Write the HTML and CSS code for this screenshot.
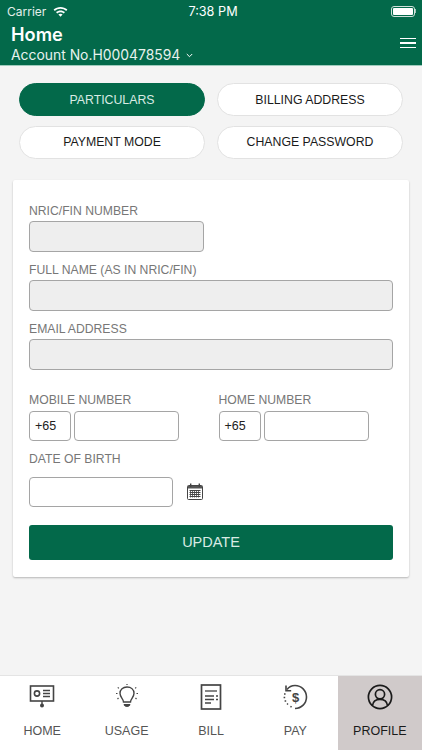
FILE: index.html
```html
<!DOCTYPE html>
<html lang="en">
  <head>
    <meta charset="UTF-8" />
    <meta name="viewport" content="width=device-width, initial-scale=1.0" />
    <title>Profile</title>
    <link rel="stylesheet" href="styles.css">
  </head>
  <body>
    <div class="app">
      <header class="header">
        <div class="status">
          <div class="status-left">
            <span>Carrier</span>
            <svg class="wifi" width="15" height="11" viewBox="0 0 15 11">
              <path d="M0.6 3.6C4.4 0.1 10.6 0.1 14.4 3.6L13.2 4.9C10 2 5 2 1.8 4.9Z" fill="#fff" />
              <path d="M3 6.1C5.5 3.8 9.5 3.8 12 6.1L10.8 7.4C8.9 5.7 6.1 5.7 4.2 7.4Z" fill="#fff" />
              <path d="M5.4 8.5C6.6 7.4 8.4 7.4 9.6 8.5L7.5 10.8Z" fill="#fff" />
            </svg>
          </div>
          <span class="status-time">7:38 PM</span>
          <div class="battery-wrap">
            <div class="battery"><div class="battery-fill"></div></div>
            <div class="battery-nub"></div>
          </div>
        </div>
        <div class="title-row">
          <div>
            <h1 class="title">Home</h1>
            <div class="account">
              <span>Account No.H000478594</span>
              <svg width="7" height="5" viewBox="0 0 7 5">
                <path d="M0.8 1L3.5 3.7L6.2 1" fill="none" stroke="#fff" stroke-width="1" />
              </svg>
            </div>
          </div>
          <div class="menu"><span></span><span></span><span></span></div>
        </div>
      </header>

      <main class="content">
        <div class="tabs">
          <button class="tab active">PARTICULARS</button>
          <button class="tab">BILLING ADDRESS</button>
          <button class="tab">PAYMENT MODE</button>
          <button class="tab">CHANGE PASSWORD</button>
        </div>

        <form class="card">
          <label class="label">NRIC/FIN NUMBER</label>
          <div class="input disabled nric"></div>
          <label class="label">FULL NAME (AS IN NRIC/FIN)</label>
          <div class="input disabled"></div>
          <label class="label">EMAIL ADDRESS</label>
          <div class="input disabled"></div>

          <div class="phones">
            <div class="phone">
              <label class="label">MOBILE NUMBER</label>
              <div class="phone-inputs">
                <div class="input code">+65</div>
                <div class="input number"></div>
              </div>
            </div>
            <div class="phone">
              <label class="label">HOME NUMBER</label>
              <div class="phone-inputs">
                <div class="input code">+65</div>
                <div class="input number"></div>
              </div>
            </div>
          </div>

          <label class="label">DATE OF BIRTH</label>
          <div class="dob">
            <div class="input dob-input"></div>
            <svg width="16" height="17" viewBox="0 0 16 17">
              <rect x="0.5" y="2.5" width="15" height="14" rx="1" fill="#fff" stroke="#444" />
              <rect x="1" y="3" width="14" height="2.5" fill="#555" />
              <rect x="3" y="0.5" width="1.4" height="3.5" fill="#444" />
              <rect x="11.6" y="0.5" width="1.4" height="3.5" fill="#444" />
              <path d="M2.5 7.5H13.5M2.5 9.5H13.5M2.5 11.5H13.5M2.5 13.5H13.5" stroke="#444" />
              <path d="M3.5 7V14.5M5.5 7V14.5M7.5 7V14.5M9.5 7V14.5M11.5 7V14.5" stroke="#444" stroke-width="0.8" />
            </svg>
          </div>

          <button type="button" class="update">UPDATE</button>
        </form>
      </main>

      <nav class="footer">
        <div class="nav-item">
          <svg class="nav-icon" width="26" height="26" viewBox="0 0 26 26">
            <rect x="1.5" y="2" width="23" height="15" fill="none" stroke="#444" stroke-width="1.6" />
            <circle cx="8" cy="9.5" r="2.6" fill="none" stroke="#444" stroke-width="1.6" />
            <path d="M14 6.5H21M14 9.5H21M14 12.5H21" stroke="#444" stroke-width="1.4" />
            <path d="M13 17V20" stroke="#444" stroke-width="1.4" />
            <circle cx="13" cy="21.5" r="2" fill="#444" />
          </svg>
          <span>HOME</span>
        </div>
        <div class="nav-item">
          <svg class="nav-icon" width="26" height="26" viewBox="0 0 26 26">
            <path d="M9.5 18C9.5 15 6 13.5 6 9.3C6 5.5 9 3 13 3C17 3 20 5.5 20 9.3C20 13.5 16.5 15 16.5 18Z" fill="none" stroke="#444" stroke-width="1.4" />
            <path d="M10 20.5C10 23 16 23 16 20.5Z" fill="#444" stroke="#444" />
            <path d="M2 9.5H3.5M22.5 9.5H24M3.8 3.4L4.8 4.4M22.2 3.4L21.2 4.4M3.5 15L4.5 14M22.5 15L21.5 14M13 0V1" stroke="#444" stroke-width="1.2" />
          </svg>
          <span>USAGE</span>
        </div>
        <div class="nav-item">
          <svg class="nav-icon" width="26" height="26" viewBox="0 0 26 26">
            <rect x="3.5" y="1" width="19" height="24" fill="none" stroke="#444" stroke-width="1.7" />
            <path d="M7 7H19" stroke="#444" stroke-width="1.3" />
            <path d="M7 12H16M18 12H20M7 15.5H16M18 15.5H20M7 19H13" stroke="#444" stroke-width="1.6" />
          </svg>
          <span>BILL</span>
        </div>
        <div class="nav-item">
          <svg class="nav-icon" width="26" height="26" viewBox="0 0 26 26">
            <path d="M5 5.5C7 2.8 10 1.5 13 1.5C19.4 1.5 24.5 6.6 24.5 13C24.5 19.4 19.4 24.5 13 24.5" fill="none" stroke="#444" stroke-width="1.6" />
            <path d="M4 1.5V6.7H9.2" fill="none" stroke="#444" stroke-width="1.6" />
            <path d="M2 10H3.6M1.6 13.5H3.2M2.6 17H4.2M5 20.5L6 19.5M8.6 23.3L9.4 22" stroke="#444" stroke-width="1.4" />
            <text x="13.5" y="18" class="dollar">$</text>
          </svg>
          <span>PAY</span>
        </div>
        <div class="nav-item active">
          <svg class="nav-icon" width="26" height="26" viewBox="0 0 26 26">
            <circle cx="13" cy="13" r="11.6" fill="none" stroke="#1a1a1a" stroke-width="1.7" />
            <circle cx="13" cy="10.3" r="4.6" fill="none" stroke="#1a1a1a" stroke-width="1.7" />
            <path d="M5.5 21.5C6 17.5 9 15.3 13 15.3C17 15.3 20 17.5 20.5 21.5" fill="none" stroke="#1a1a1a" stroke-width="1.7" />
          </svg>
          <span>PROFILE</span>
        </div>
      </nav>
    </div>
  </body>
</html>
```
FILE: styles.css
```css
* {
  box-sizing: border-box;
}
body {
  margin: 0;
  font-family: "Liberation Sans", Arial, sans-serif;
  background-color: #f4f4f4;
}
.app {
  display: flex;
  flex-direction: column;
  height: 750px;
}
.header {
  height: 66px;
  background-color: #03694a;
  color: #fff;
  border-bottom: 1px solid #9fcbbd;
}
.status {
  display: grid;
  grid-template-columns: 1fr auto 1fr;
  align-items: center;
  height: 22px;
  padding: 0 6px 0 7px;
  font-size: 13px;
  font-family: Inter, "Liberation Sans", sans-serif;
}
.status-left {
  display: flex;
  align-items: center;
  gap: 7px;
  font-size: 12px;
  color: #e4efea;
}
.status-time {
  margin-left: 3px;
  font-size: 12.7px;
}
.battery-wrap {
  justify-self: end;
  display: flex;
  align-items: center;
}
.battery {
  width: 24px;
  height: 11px;
  padding: 1px;
  border: 1px solid #cfe0da;
  border-radius: 3px;
}
.battery-fill {
  height: 100%;
  background-color: #fff;
  border-radius: 1px;
}
.battery-nub {
  width: 1px;
  height: 4px;
  background-color: #9fc4b7;
}
.title-row {
  display: flex;
  justify-content: space-between;
  align-items: center;
  padding: 0 6px 0 11px;
}
.title {
  margin: 0;
  font-size: 18.2px;
  line-height: 24px;
  font-weight: 600;
  font-family: Inter, "Liberation Sans", sans-serif;
}
.account {
  display: flex;
  align-items: center;
  gap: 6px;
  font-size: 13.9px;
  line-height: 18px;
  font-family: Inter, "Liberation Sans", sans-serif;
  color: #e8f2ee;
}
.menu {
  display: flex;
  flex-direction: column;
  gap: 3px;
  width: 16px;
}
.menu span {
  height: 1.5px;
  background-color: #fff;
}
.content {
  flex: 1;
  padding: 17px 13px 0;
}
.tabs {
  display: grid;
  grid-template-columns: 186px 186px;
  gap: 9.5px 12px;
  padding: 0 6px;
}
.tab {
  height: 33px;
  border: 1px solid #e2e2e2;
  border-radius: 17px;
  background-color: #fff;
  color: #1a1a1a;
  font-family: "Liberation Sans", Arial, sans-serif;
  font-size: 12.3px;
  padding: 0;
}
.tab.active {
  background-color: #03694a;
  border-color: #03694a;
  color: #d9ebe4;
}
.card {
  display: flex;
  flex-direction: column;
  align-items: flex-start;
  width: 396px;
  height: 397.5px;
  margin-top: 21px;
  padding: 24px 16px 0;
  background-color: #fff;
  border-radius: 2px;
  box-shadow: 0 1px 2px rgba(0, 0, 0, 0.25);
}
.label {
  display: block;
  font-size: 12.2px;
  line-height: 14px;
  color: #777;
  margin-bottom: 3px;
}
.input {
  height: 31px;
  border: 1px solid #a5a5a5;
  border-radius: 4px;
  background-color: #fff;
  font-size: 12.5px;
  line-height: 28px;
  color: #222;
}
.input.disabled {
  width: 100%;
  margin-bottom: 11px;
  background-color: #eeeeee;
}
.input.disabled.nric {
  width: 175px;
}
.phones {
  display: flex;
  width: 100%;
  margin-top: 12px;
  margin-bottom: 11px;
}
.phone {
  flex: none;
  width: 189.5px;
}
.phone .label {
  margin-bottom: 4px;
}
.phone-inputs {
  display: flex;
  gap: 3px;
}
.input.code {
  width: 42px;
  height: 30px;
  padding-left: 5px;
}
.input.number {
  width: 105px;
  height: 30px;
}
.dob {
  display: flex;
  align-items: center;
  gap: 14px;
  margin-top: 8px;
}
.input.dob-input {
  width: 144px;
  height: 30px;
}
.update {
  width: 100%;
  height: 35px;
  margin-top: 18px;
  border: none;
  border-radius: 3px;
  background-color: #03694a;
  color: #d9ebe4;
  font-family: "Liberation Sans", Arial, sans-serif;
  font-size: 14.5px;
}
.footer {
  display: grid;
  grid-template-columns: repeat(5, 1fr);
  height: 75px;
  background-color: #fff;
  border-top: 1px solid #e4e4e4;
}
.nav-item {
  display: flex;
  flex-direction: column;
  align-items: center;
  padding-top: 8px;
  font-size: 12.5px;
  color: #555;
}
.nav-item span {
  margin-top: 14px;
}
.nav-item.active {
  background-color: #d0caca;
  color: #1a1a1a;
}
.dollar {
  font-family: "Liberation Sans", Arial, sans-serif;
  font-size: 13px;
  font-weight: 700;
  fill: #444;
  text-anchor: middle;
}
```
